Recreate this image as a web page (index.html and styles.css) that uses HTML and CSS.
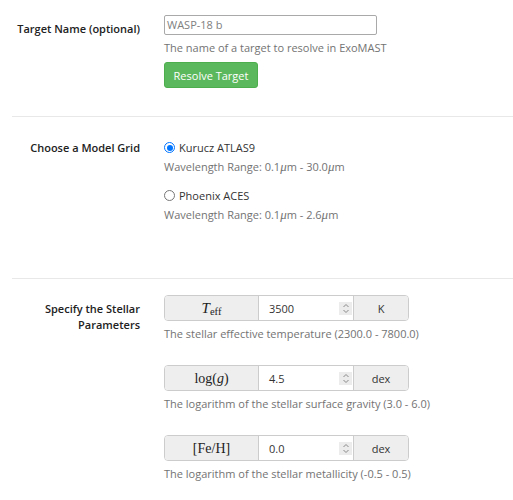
FILE: index.html
```html
<!DOCTYPE html>
<html>
<head>
<meta charset="utf-8">
<link rel="stylesheet" href="styles.css">
</head>
<body>
<div class="form">
  <section class="row row-target">
    <div class="label">Target Name (optional)</div>
    <div class="field">
      <div class="text-input">WASP-18 b</div>
      <div class="help">The name of a target to resolve in ExoMAST</div>
      <button class="btn">Resolve Target</button>
    </div>
  </section>
  <hr class="sep sep1">
  <section class="row row-grid">
    <div class="label">Choose a Model Grid</div>
    <div class="field">
      <div class="radio"><span class="dot checked"></span><span>Kurucz ATLAS9</span></div>
      <div class="help">Wavelength Range: 0.1<i class="mu">μ</i>m - 30.0<i class="mu">μ</i>m</div>
      <div class="radio radio2"><span class="dot"></span><span>Phoenix ACES</span></div>
      <div class="help">Wavelength Range: 0.1<i class="mu">μ</i>m - 2.6<i class="mu">μ</i>m</div>
    </div>
  </section>
  <hr class="sep sep2">
  <section class="row row-params">
    <div class="label">Specify the Stellar<br>Parameters</div>
    <div class="field">
      <div class="group">
        <div class="addon math"><i class="big">T</i><span class="sub">eff</span></div>
        <div class="num"><span>3500</span><span class="spin"><svg width="8" height="11" viewBox="0 0 8 11"><path d="M1.5 4 L4 1.5 L6.5 4 M1.5 7 L4 9.5 L6.5 7" fill="none" stroke="#888" stroke-width="1"/></svg></span></div>
        <div class="addon unit">K</div>
      </div>
      <div class="help">The stellar effective temperature (2300.0 - 7800.0)</div>
      <div class="group">
        <div class="addon math">log(<i>g</i>)</div>
        <div class="num"><span>4.5</span><span class="spin"><svg width="8" height="11" viewBox="0 0 8 11"><path d="M1.5 4 L4 1.5 L6.5 4 M1.5 7 L4 9.5 L6.5 7" fill="none" stroke="#888" stroke-width="1"/></svg></span></div>
        <div class="addon unit">dex</div>
      </div>
      <div class="help">The logarithm of the stellar surface gravity (3.0 - 6.0)</div>
      <div class="group">
        <div class="addon math">[Fe/H]</div>
        <div class="num"><span>0.0</span><span class="spin"><svg width="8" height="11" viewBox="0 0 8 11"><path d="M1.5 4 L4 1.5 L6.5 4 M1.5 7 L4 9.5 L6.5 7" fill="none" stroke="#888" stroke-width="1"/></svg></span></div>
        <div class="addon unit">dex</div>
      </div>
      <div class="help">The logarithm of the stellar metallicity (-0.5 - 0.5)</div>
    </div>
  </section>
</div>
</body>
</html>
```
FILE: styles.css
```css
html, body {
  margin: 0;
  padding: 0;
  background: #fff;
}
body {
  font-family: "Open Sans", "Liberation Sans", sans-serif;
  font-size: 11px;
  color: #333;
  line-height: 17px;
}
.row {
  display: flex;
  gap: 24px;
}
.label {
  width: 140px;
  flex: none;
  text-align: right;
  font-weight: 600;
  white-space: nowrap;
  color: #222;
}
.field {
  flex: 1;
  display: flex;
  flex-direction: column;
  align-items: flex-start;
}
.row-target {
  padding-top: 15px;
}
.row-target .label {
  padding-top: 5px;
}
.text-input {
  width: 207px;
  height: 18px;
  border: 1px solid #a9a9a9;
  border-radius: 2px;
  padding: 0 2px;
  color: #808080;
  line-height: 18px;
}
.row-target .help {
  margin-top: 4px;
}
.btn {
  margin-top: 6px;
  width: 94px;
  height: 26px;
  background: #5cb85c;
  border: 1px solid #4cae4c;
  border-radius: 3px;
  color: #fff;
  font-family: inherit;
  font-size: 11px;
  padding: 0;
}
.help {
  color: #737373;
}
.sep {
  border: 0;
  border-top: 1px solid #e8e8e8;
  margin: 0 0 0 12px;
}
.sep1 {
  margin-top: 28px;
}
.row-grid {
  padding-top: 22px;
}
.radio {
  display: flex;
  align-items: center;
  gap: 4px;
  height: 17px;
}
.row-grid .help {
  margin-top: 2px;
}
.radio2 {
  margin-top: 12px;
}
.dot {
  width: 11px;
  height: 11px;
  border: 1px solid #767676;
  border-radius: 50%;
  box-sizing: border-box;
  position: relative;
}
.dot.checked {
  border-color: #0075ff;
  background: #fff;
}
.dot.checked::after {
  content: "";
  position: absolute;
  left: 1.5px;
  top: 1.5px;
  width: 6px;
  height: 6px;
  border-radius: 50%;
  background: #0075ff;
}
.mu {
  font-family: "Liberation Serif", serif;
  font-size: 13px;
}
.sep2 {
  margin-top: 55px;
}
.row-params {
  padding-top: 16px;
}
.row-params .label {
  padding-top: 6px;
  line-height: 16px;
}
.group {
  display: flex;
  height: 26px;
  border: 1px solid #ccc;
  border-radius: 4px;
  box-sizing: border-box;
  overflow: hidden;
}
.group + .help {
  margin-top: 4px;
}
.help + .group {
  margin-top: 23px;
}
.addon {
  background: #eee;
  display: flex;
  align-items: center;
  justify-content: center;
}
.math {
  width: 93px;
  border-right: 1px solid #ccc;
  font-family: "Liberation Serif", serif;
  font-size: 14px;
  color: #222;
}
.math .big {
  font-size: 15px;
}
.math .sub {
  font-size: 10.5px;
  margin-top: 6px;
}
.num {
  width: 94px;
  display: flex;
  align-items: center;
  justify-content: space-between;
  padding: 0 0 0 10px;
  box-sizing: border-box;
  color: #333;
}
.spin {
  width: 13px;
  height: 13px;
  background: #ececec;
  display: flex;
  align-items: center;
  justify-content: center;
  margin-right: 1px;
}
.unit {
  width: 54px;
  border-left: 1px solid #ccc;
  color: #333;
}
```
